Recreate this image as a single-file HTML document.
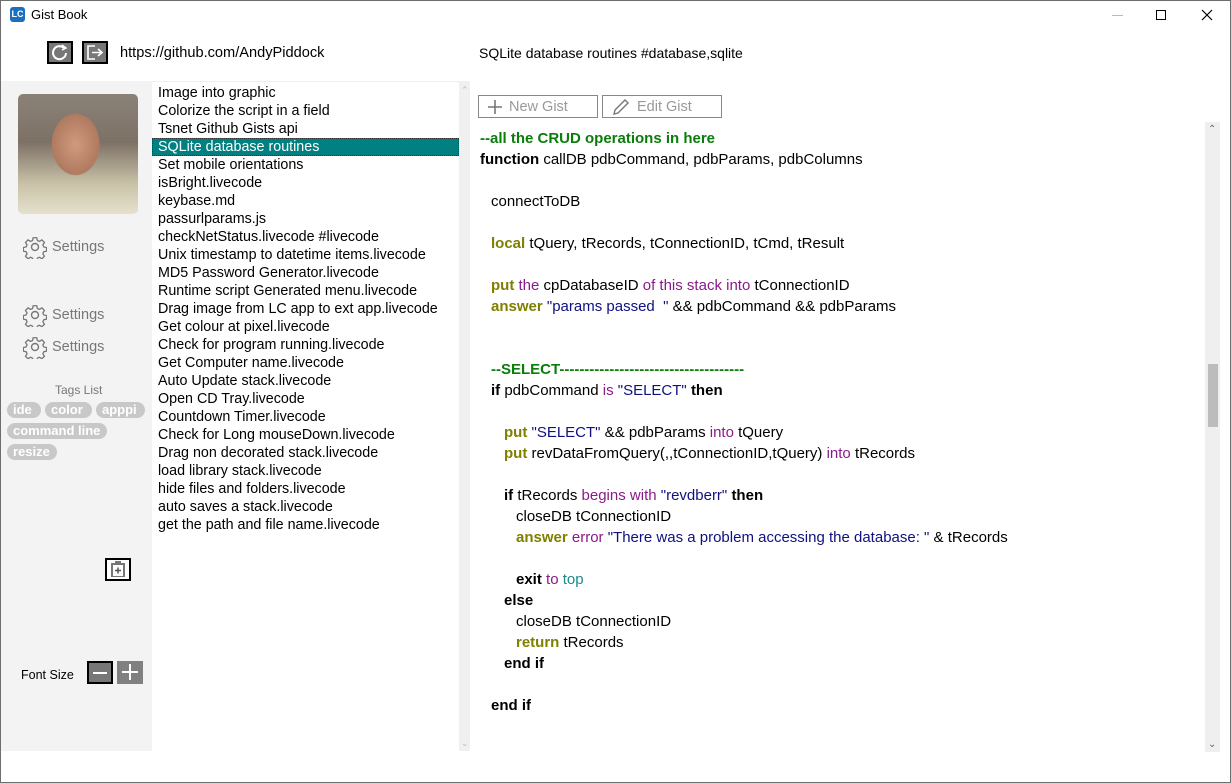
<!DOCTYPE html>
<html><head><meta charset="utf-8"><style>
*{margin:0;padding:0;box-sizing:border-box}
body{width:1231px;height:783px;position:relative;overflow:hidden;background:#fff;font-family:"Liberation Sans","DejaVu Sans",sans-serif;font-size:14px;color:#000;border:1px solid #6e6e6e}
.a{position:absolute}
#left{left:0;top:80px;width:151px;height:670px;background:#f3f3f3}
#list{left:151px;top:80px;width:307px;height:670px;background:#fff;border-top:1px solid #eee;padding-top:2px}
#list div{height:18px;line-height:18px;padding-left:6px;font-size:14.3px;white-space:nowrap}
#list .sel{background:#008080;color:#fff;border:1px dotted #333;line-height:16px;padding-left:5px}
#lsb{left:458px;top:80px;width:11px;height:670px;background:#f0f0f0}
#csb{left:1204px;top:121px;width:15px;height:630px;background:#efefef}
.code div{position:absolute;white-space:nowrap;font-size:15px}
.b{font-weight:bold}
.g{color:#0a7d0a;font-weight:bold}
.o{color:#7f7f00;font-weight:bold}
.p{color:#8a1a8a}
.n{color:#101080}
.t{color:#1a8a8a}
.set{left:22px;color:#777;font-size:14.5px;display:flex;align-items:center;gap:5px;line-height:24px}
.tag{position:absolute;background:#c8c8c8;color:#fff;font-weight:bold;font-size:13px;border-radius:8px;height:16px;line-height:16px;padding:0 6px}
.btn{position:absolute;top:94px;height:23px;border:1px solid #888;color:#999;font-size:14.5px;display:flex;align-items:center;gap:6px;padding-left:8px}
</style></head><body>
<div class="a" style="left:9px;top:6px;width:15px;height:15px;background:#1a6fc0;border-radius:3px;color:#fff;font-size:9px;font-weight:bold;line-height:15px;text-align:center">LC</div>
<div class="a" style="left:30px;top:6px;font-size:13px">Gist Book</div>
<div class="a" style="left:1111px;top:14px;width:11px;height:1px;background:#bbb"></div>
<div class="a" style="left:1155px;top:9px;width:10px;height:10px;border:1px solid #000"></div>
<svg class="a" style="left:1200px;top:8px" width="12" height="12"><path d="M1 1L11 11M11 1L1 11" stroke="#000" stroke-width="1.2"/></svg>
<div class="a" style="left:46px;top:40px;width:26px;height:23px;background:#777;border:2px solid #000"><svg width="22" height="19"><path d="M15 5A6.5 6.5 0 1 0 17 10" fill="none" stroke="#fff" stroke-width="2"/><path d="M13 2L17 5L13 7" fill="none" stroke="#fff" stroke-width="1.5"/></svg></div>
<div class="a" style="left:81px;top:40px;width:26px;height:23px;background:#777;border:2px solid #000"><svg width="22" height="19"><path d="M11 3H4V16H11" fill="none" stroke="#fff" stroke-width="1.6"/><path d="M8 9.5H18M14 6L18 9.5L14 13" fill="none" stroke="#fff" stroke-width="1.6"/></svg></div>
<div class="a" style="left:119px;top:44px;font-size:14.6px">https://github.com/AndyPiddock</div>
<div class="a" style="left:478px;top:44px;font-size:14px">SQLite database routines #database,sqlite</div>
<div class="a" id="left">
 <div class="a" style="left:17px;top:13px;width:120px;height:120px;border-radius:5px;background:radial-gradient(ellipse 28% 36% at 48% 42%,#d09a7e,#b07a60 70%,transparent 72%),linear-gradient(180deg,#8b8277 0%,#7d7166 40%,#c9c2a8 75%,#e4e0cc 100%)"></div>
 <div class="a set" style="top:154px"><svg width="24" height="24" viewBox="0 0 24 24"><path d="M10 2h4l.6 3 2.3 1 2.6-1.7 2.8 2.8-1.7 2.6 1 2.3 3 .6v4l-3 .6-1 2.3 1.7 2.6-2.8 2.8-2.6-1.7-2.3 1-.6 3h-4l-.6-3-2.3-1-2.6 1.7-2.8-2.8 1.7-2.6-1-2.3-3-.6v-4l3-.6 1-2.3-1.7-2.6 2.8-2.8 2.6 1.7 2.3-1z" transform="scale(.92) translate(1 1)" fill="none" stroke="#777" stroke-width="1.4"/><circle cx="12" cy="12" r="3.5" fill="none" stroke="#777" stroke-width="1.4"/></svg><span>Settings</span></div>
 <div class="a set" style="top:222px"><svg width="24" height="24" viewBox="0 0 24 24"><path d="M10 2h4l.6 3 2.3 1 2.6-1.7 2.8 2.8-1.7 2.6 1 2.3 3 .6v4l-3 .6-1 2.3 1.7 2.6-2.8 2.8-2.6-1.7-2.3 1-.6 3h-4l-.6-3-2.3-1-2.6 1.7-2.8-2.8 1.7-2.6-1-2.3-3-.6v-4l3-.6 1-2.3-1.7-2.6 2.8-2.8 2.6 1.7 2.3-1z" transform="scale(.92) translate(1 1)" fill="none" stroke="#777" stroke-width="1.4"/><circle cx="12" cy="12" r="3.5" fill="none" stroke="#777" stroke-width="1.4"/></svg><span>Settings</span></div>
 <div class="a set" style="top:254px"><svg width="24" height="24" viewBox="0 0 24 24"><path d="M10 2h4l.6 3 2.3 1 2.6-1.7 2.8 2.8-1.7 2.6 1 2.3 3 .6v4l-3 .6-1 2.3 1.7 2.6-2.8 2.8-2.6-1.7-2.3 1-.6 3h-4l-.6-3-2.3-1-2.6 1.7-2.8-2.8 1.7-2.6-1-2.3-3-.6v-4l3-.6 1-2.3-1.7-2.6 2.8-2.8 2.6 1.7 2.3-1z" transform="scale(.92) translate(1 1)" fill="none" stroke="#777" stroke-width="1.4"/><circle cx="12" cy="12" r="3.5" fill="none" stroke="#777" stroke-width="1.4"/></svg><span>Settings</span></div>
 <div class="a" style="left:54px;top:302px;font-size:12px;color:#777">Tags List</div>
 <span class="tag" style="left:6px;top:321px;width:34px">ide</span>
 <span class="tag" style="left:44px;top:321px;width:47px">color</span>
 <span class="tag" style="left:95px;top:321px;width:49px">apppi</span>
 <span class="tag" style="left:6px;top:342px;width:100px">command line</span>
 <span class="tag" style="left:6px;top:363px;width:50px">resize</span>
 <div class="a" style="left:104px;top:477px;width:26px;height:23px;border:2px solid #000;background:#fff"><svg width="22" height="19"><rect x="4" y="3" width="14" height="14" fill="#777"/><rect x="8" y="1" width="6" height="3" fill="#777"/><rect x="6" y="5" width="10" height="11" fill="#fff"/><path d="M11 7.5V13.5M8 10.5H14" stroke="#555" stroke-width="1.5"/></svg></div>
 <div class="a" style="left:20px;top:587px;font-size:12.5px">Font Size</div>
 <div class="a" style="left:86px;top:580px;width:26px;height:23px;background:#777;border:2px solid #000"><div style="position:absolute;left:4px;top:9px;width:14px;height:2px;background:#fff"></div></div>
 <div class="a" style="left:116px;top:580px;width:26px;height:23px;background:#808080"><div style="position:absolute;left:5px;top:10px;width:16px;height:2px;background:#fff"></div><div style="position:absolute;left:12px;top:3px;width:2px;height:16px;background:#fff"></div></div>
</div>
<div class="a" id="list">
<div>Image into graphic</div><div>Colorize the script in a field</div><div>Tsnet Github Gists api</div><div class="sel">SQLite database routines</div><div>Set mobile orientations</div><div>isBright.livecode</div><div>keybase.md</div><div>passurlparams.js</div><div>checkNetStatus.livecode #livecode</div><div>Unix timestamp to datetime items.livecode</div><div>MD5 Password Generator.livecode</div><div>Runtime script Generated menu.livecode</div><div>Drag image from LC app to ext app.livecode</div><div>Get colour at pixel.livecode</div><div>Check for program running.livecode</div><div>Get Computer name.livecode</div><div>Auto Update stack.livecode</div><div>Open CD Tray.livecode</div><div>Countdown Timer.livecode</div><div>Check for Long mouseDown.livecode</div><div>Drag non decorated stack.livecode</div><div>load library stack.livecode</div><div>hide files and folders.livecode</div><div>auto saves a stack.livecode</div><div>get the path and file name.livecode</div>
</div>
<div class="a" id="lsb"><div style="position:absolute;left:2px;top:4px;color:#bbb;font-size:9px">&#8963;</div><div style="position:absolute;left:2px;bottom:2px;color:#bbb;font-size:9px">&#8964;</div></div>
<div class="btn" style="left:477px;width:120px"><svg width="16" height="16"><path d="M8 1V15M1 8H15" stroke="#777" stroke-width="1.6"/></svg>New Gist</div>
<div class="btn" style="left:601px;width:120px"><svg width="20" height="20"><path d="M3 17L4 13L14 3L17 6L7 16Z" fill="none" stroke="#777" stroke-width="1.4"/></svg>Edit Gist</div>
<div class="code">
<div style="left:479px;top:129px" class="g">--all the CRUD operations in here</div>
<div style="left:479px;top:150px"><span class="b">function</span> callDB pdbCommand, pdbParams, pdbColumns</div>
<div style="left:490px;top:192px">connectToDB</div>
<div style="left:490px;top:234px"><span class="o">local</span> tQuery, tRecords, tConnectionID, tCmd, tResult</div>
<div style="left:490px;top:276px"><span class="o">put</span> <span class="p">the</span> cpDatabaseID <span class="p">of this stack into</span> tConnectionID</div>
<div style="left:490px;top:297px"><span class="o">answer</span> <span class="n">"params passed&nbsp; "</span> &amp;&amp; pdbCommand &amp;&amp; pdbParams</div>
<div style="left:490px;top:360px" class="g">--SELECT-------------------------------------</div>
<div style="left:490px;top:381px"><span class="b">if</span> pdbCommand <span class="p">is</span> <span class="n">"SELECT"</span> <span class="b">then</span></div>
<div style="left:503px;top:423px"><span class="o">put</span> <span class="n">"SELECT"</span> &amp;&amp; pdbParams <span class="p">into</span> tQuery</div>
<div style="left:503px;top:444px"><span class="o">put</span> revDataFromQuery(,,tConnectionID,tQuery) <span class="p">into</span> tRecords</div>
<div style="left:503px;top:486px"><span class="b">if</span> tRecords <span class="p">begins with</span> <span class="n">"revdberr"</span> <span class="b">then</span></div>
<div style="left:515px;top:507px">closeDB tConnectionID</div>
<div style="left:515px;top:528px"><span class="o">answer</span> <span class="p">error</span> <span class="n">"There was a problem accessing the database: "</span> &amp; tRecords</div>
<div style="left:515px;top:570px"><span class="b">exit</span> <span class="p">to</span> <span class="t">top</span></div>
<div style="left:503px;top:591px" class="b">else</div>
<div style="left:515px;top:612px">closeDB tConnectionID</div>
<div style="left:515px;top:633px"><span class="o">return</span> tRecords</div>
<div style="left:503px;top:654px" class="b">end if</div>
<div style="left:490px;top:696px" class="b">end if</div>
</div>
<div class="a" id="csb"><div style="position:absolute;left:3px;top:242px;width:10px;height:63px;background:#bcbcbc"></div><div style="position:absolute;left:3px;top:2px;color:#666;font-size:10px">&#8963;</div><div style="position:absolute;left:3px;bottom:2px;color:#666;font-size:10px">&#8964;</div></div>
</body></html>
